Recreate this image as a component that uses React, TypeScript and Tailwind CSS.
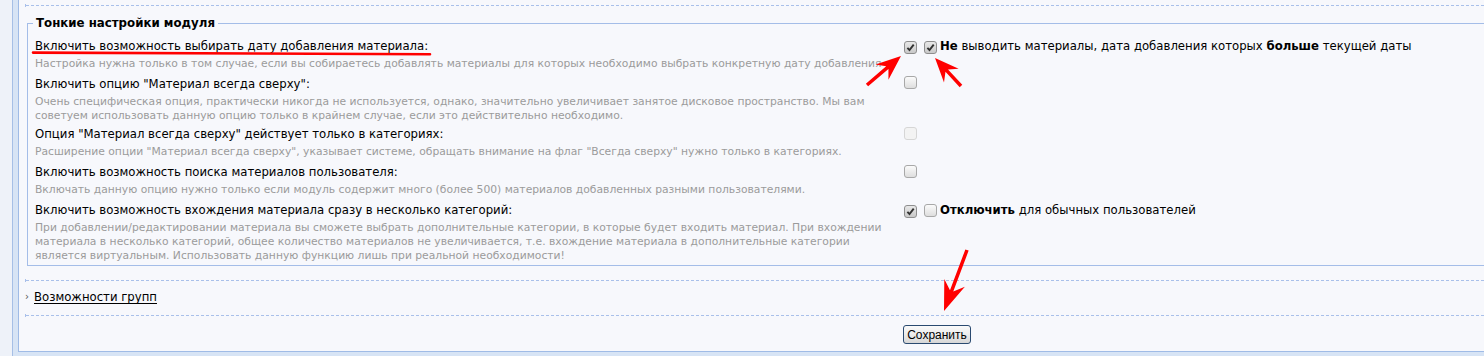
import React from 'react';

interface Row {
  label: string;
  desc: string[];
  gap: string;
  cbTop: string;
  checked: boolean;
  disabled?: boolean;
  extra?: React.ReactNode;
}

const Check: React.FC<{ checked?: boolean; disabled?: boolean }> = ({ checked, disabled }) => (
  <span
    className={`inline-flex w-[13px] h-[13px] shrink-0 items-center justify-center rounded-[3px] border ${
      disabled
        ? 'border-[#d6d6d6] bg-[#f3f3f3]'
        : checked
        ? 'border-[#8e8e8e] bg-linear-to-b from-[#e8e8e8] to-[#c9c9c9]'
        : 'border-[#a8a8a8] bg-linear-to-b from-[#fbfbfb] to-[#dedede]'
    }`}
  >
    {checked && (
      <svg width="9" height="9" viewBox="0 0 9 9">
        <path d="M1.4 4.9 L3.5 7.1 L7.7 1.7" fill="none" stroke="#333" strokeWidth="1.9" />
      </svg>
    )}
  </span>
);

const rows: Row[] = [
  {
    label: 'Включить возможность выбирать дату добавления материала:',
    desc: [
      'Настройка нужна только в том случае, если вы собираетесь добавлять материалы для которых необходимо выбрать конкретную дату добавления',
    ],
    gap: 'mb-[5px]',
    cbTop: 'mt-[2px]',
    checked: true,
    extra: (
      <>
        <span className="ml-[7px] mt-[2px]">
          <Check checked />
        </span>
        <span className="ml-[3px] whitespace-nowrap">
          <b>Не</b> выводить материалы, дата добавления которых <b>больше</b> текущей даты
        </span>
      </>
    ),
  },
  {
    label: 'Включить опцию "Материал всегда сверху":',
    desc: [
      'Очень специфическая опция, практически никогда не используется, однако, значительно увеличивает занятое дисковое пространство. Мы вам',
      'советуем использовать данную опцию только в крайнем случае, если это действительно необходимо.',
    ],
    gap: 'mb-[3px]',
    cbTop: 'mt-0',
    checked: false,
  },
  {
    label: 'Опция "Материал всегда сверху" действует только в категориях:',
    desc: [
      'Расширение опции "Материал всегда сверху", указывает системе, обращать внимание на флаг "Всегда сверху" нужно только в категориях.',
    ],
    gap: 'mb-[5px]',
    cbTop: 'mt-[1px]',
    checked: false,
    disabled: true,
  },
  {
    label: 'Включить возможность поиска материалов пользователя:',
    desc: [
      'Включать данную опцию нужно только если модуль содержит много (более 500) материалов добавленных разными пользователями.',
    ],
    gap: 'mb-[5px]',
    cbTop: 'mt-[1px]',
    checked: false,
  },
  {
    label: 'Включить возможность вхождения материала сразу в несколько категорий:',
    desc: [
      'При добавлении/редактировании материала вы сможете выбрать дополнительные категории, в которые будет входить материал. При вхождении',
      'материала в несколько категорий, общее количество материалов не увеличивается, т.е. вхождение материала в дополнительные категории',
      'является виртуальным. Использовать данную функцию лишь при реальной необходимости!',
    ],
    gap: 'mb-0',
    cbTop: 'mt-[2px]',
    checked: true,
    extra: (
      <>
        <span className="ml-[7px] mt-[2px]">
          <Check />
        </span>
        <span className="ml-[3px] whitespace-nowrap">
          <b>Отключить</b> для обычных пользователей
        </span>
      </>
    ),
  },
];

// red annotation arrow, tail -> tip
const arrowPts = (x1: number, y1: number, x2: number, y2: number, head: number, half: number, shaft: number) => {
  const dx = x2 - x1;
  const dy = y2 - y1;
  const len = Math.hypot(dx, dy);
  const ux = dx / len;
  const uy = dy / len;
  const px = -uy;
  const py = ux;
  const bx = x2 - ux * head;
  const by = y2 - uy * head;
  const nx = x2 - ux * head * 0.72;
  const ny = y2 - uy * head * 0.72;
  const s = shaft / 2;
  const pts = [
    [x2, y2],
    [bx + px * half, by + py * half],
    [nx + px * s, ny + py * s],
    [x1 + px * s, y1 + py * s],
    [x1 - px * s, y1 - py * s],
    [nx - px * s, ny - py * s],
    [bx - px * half, by - py * half],
  ];
  return pts.map((p) => p.join(',')).join(' ');
};

const Dashed: React.FC<{ className?: string }> = ({ className }) => (
  <div className={`flex h-px items-start ${className ?? ''}`}>
    <span className="-mt-[1px] w-px h-[3px] shrink-0 bg-[#a9c0ea]" />
    <div className="flex-1 border-t border-dashed border-[#a9c0ea]" />
  </div>
);

export default function App() {
  return (
    <div className="relative w-[1484px] h-[356px] overflow-hidden bg-[#eef2f9] pl-[12px] font-['DejaVu_Sans',Verdana,sans-serif] text-black">
      <div className="h-full border-l border-[#a6bfe6] bg-[#d7e4f5] pl-[5px] pb-[4px]">
        <div className="h-[352px] border-l border-b border-[#9fbbe6] bg-[#f7f8fc] pt-[5px] pl-[6px]">
          <Dashed />

          {/* Fine settings */}
          <fieldset className="mt-[9px] ml-[2px] w-[1480px] border border-[#a4bde8] pb-[2px]">
            <legend className="ml-[5px] px-[3px] text-[11.8px] leading-[16px] font-bold">
              Тонкие настройки модуля
            </legend>
            <div className="pt-[7px] pl-[7px]">
              {rows.map((row, i) => (
                <div key={i} className={`flex ${row.gap}`}>
                  <div className="w-[868px] shrink-0">
                    <div className="text-[11.7px] leading-[16px] whitespace-nowrap">{row.label}</div>
                    <div className="mt-[3px] text-[10.75px] leading-[14px] text-[#9b9b9b] whitespace-nowrap">
                      {row.desc.map((d, j) => (
                        <div key={j}>{d}</div>
                      ))}
                    </div>
                  </div>
                  <div className="flex items-start pl-[1px] text-[11.7px] leading-[16px]">
                    <span className={row.cbTop}>
                      <Check checked={row.checked} disabled={row.disabled} />
                    </span>
                    {row.extra}
                  </div>
                </div>
              ))}
            </div>
          </fieldset>

          <Dashed className="mt-[14px]" />
          <div className="flex items-center pt-[8px] pb-[10px] text-[11.7px] leading-[16px]">
            <span className="w-[9px] text-[10px] leading-[16px] text-[#555]">›</span>
            <a className="underline underline-offset-2 text-black" href="#">
              Возможности групп
            </a>
          </div>
          <Dashed />

          <div className="flex mt-[9px] ml-[878px]">
            <button className="flex h-[19px] w-[68px] items-center justify-center rounded-[3px] border border-[#2a4a70] bg-linear-to-b from-[#fafafa] via-[#ececec] to-[#d6d6d6] font-['Liberation_Sans',Arial,sans-serif] text-[12px] leading-[16px] text-black">
              Сохранить
            </button>
          </div>
        </div>
      </div>

      {/* annotations */}
      <svg className="pointer-events-none absolute left-0 top-0" width="1484" height="356">
        <path d="M33 52.6 L430 54.2" stroke="#ff0000" strokeWidth="2.6" fill="none" strokeLinecap="round" />
        <polygon points={arrowPts(867, 85, 901, 56, 25, 10, 3.5)} fill="#ff0000" />
        <polygon points={arrowPts(961, 86, 935, 58, 24, 10, 3.5)} fill="#ff0000" />
        <polygon points={arrowPts(967, 250, 944, 311, 30, 11, 3.5)} fill="#ff0000" />
      </svg>
    </div>
  );
}
